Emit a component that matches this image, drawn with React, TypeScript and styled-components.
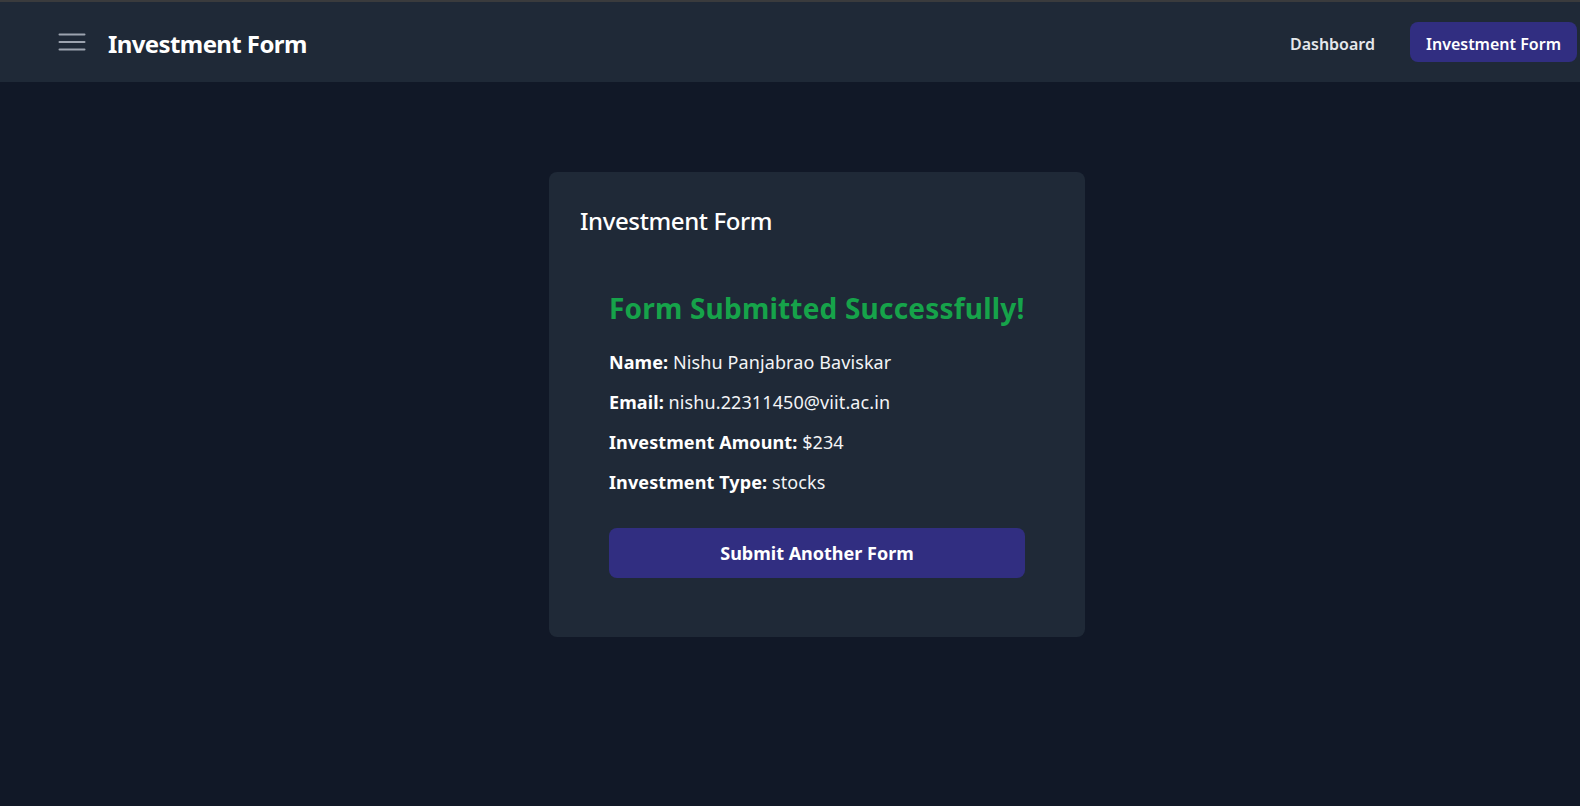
import React from "react";
import styled, { createGlobalStyle } from "styled-components";

const Global = createGlobalStyle`
  html, body { margin: 0; padding: 0; background: #111827; }
  body {
    font-family: "Noto Sans", "Open Sans", sans-serif;
    color: #f9fafb;
    min-height: 100vh;
  }
  * { box-sizing: border-box; }
`;

const Page = styled.div`
  min-height: 100vh;
  background: #111827;
  display: flex;
  flex-direction: column;
`;

const Header = styled.header`
  height: 82px;
  border-top: 2px solid #3a3b3d;
  background: #1f2937;
  display: flex;
  align-items: center;
  justify-content: space-between;
  padding: 0 3px 0 58px;
`;

const Brand = styled.div`
  display: flex;
  align-items: center;
  gap: 22px;
`;

const MenuButton = styled.button`
  background: none;
  border: none;
  padding: 0;
  display: flex;
  color: #9ca3af;
  cursor: pointer;
`;

const Title = styled.h1`
  margin: 0;
  padding-top: 4px;
  font-size: 24px;
  line-height: 32px;
  font-weight: 700;
  letter-spacing: -0.6px;
  color: #ffffff;
`;

const Nav = styled.nav`
  display: flex;
  align-items: center;
  gap: 19px;
`;

const NavLink = styled.a<{ $active?: boolean }>`
  display: inline-flex;
  align-items: center;
  height: 40px;
  padding: 4px 16px 0;
  border-radius: 8px;
  font-size: 16px;
  font-weight: 600;
  text-decoration: none;
  color: ${(p) => (p.$active ? "#ffffff" : "#e5e7eb")};
  background: ${(p) => (p.$active ? "#312e81" : "transparent")};
`;

const Main = styled.main`
  display: flex;
  justify-content: center;
  padding: 90px 0 0 54px;
`;

const Card = styled.section`
  width: 536px;
  background: #1f2937;
  border-radius: 8px;
  padding: 33px 31px 27px;
`;

const CardTitle = styled.h2`
  margin: 0;
  font-size: 24px;
  line-height: 32px;
  font-weight: 500;
  letter-spacing: -0.4px;
  color: #ffffff;
`;

const Success = styled.div`
  padding: 32px 29px;
  display: flex;
  flex-direction: column;
`;

const SuccessHeading = styled.h3`
  margin: 21px 0 22px;
  font-size: 28px;
  line-height: 36px;
  font-weight: 700;
  letter-spacing: 0.2px;
  color: #16a34a;
`;

const Detail = styled.p`
  margin: 0 0 12px;
  font-size: 18px;
  line-height: 28px;
  letter-spacing: 0.1px;
  color: #f3f4f6;

  strong { font-weight: 700; color: #ffffff; }
`;

const PrimaryButton = styled.button`
  margin-top: 20px;
  height: 50px;
  width: 100%;
  border: none;
  border-radius: 8px;
  background: #312e81;
  color: #ffffff;
  font-family: inherit;
  font-size: 18px;
  font-weight: 700;
  cursor: pointer;
`;

const MenuIcon = () => (
  <svg width="28" height="28" viewBox="0 0 28 28" fill="none" stroke="currentColor" strokeWidth="2" strokeLinecap="round">
    <path d="M1.5 6.5h25M1.5 14h25M1.5 21.5h25" />
  </svg>
);

export default function App() {
  const details = [
    ["Name:", "Nishu Panjabrao Baviskar"],
    ["Email:", "nishu.22311450@viit.ac.in"],
    ["Investment Amount:", "$234"],
    ["Investment Type:", "stocks"],
  ];
  return (
    <Page>
      <Global />
      <Header>
        <Brand>
          <MenuButton aria-label="menu">
            <MenuIcon />
          </MenuButton>
          <Title>Investment Form</Title>
        </Brand>
        <Nav>
          <NavLink href="#">Dashboard</NavLink>
          <NavLink href="#" $active>
            Investment Form
          </NavLink>
        </Nav>
      </Header>
      <Main>
        <Card>
          <CardTitle>Investment Form</CardTitle>
          <Success>
            <SuccessHeading>Form Submitted Successfully!</SuccessHeading>
            {details.map(([k, v]) => (
              <Detail key={k}>
                <strong>{k}</strong> {v}
              </Detail>
            ))}
            <PrimaryButton>Submit Another Form</PrimaryButton>
          </Success>
        </Card>
      </Main>
    </Page>
  );
}
